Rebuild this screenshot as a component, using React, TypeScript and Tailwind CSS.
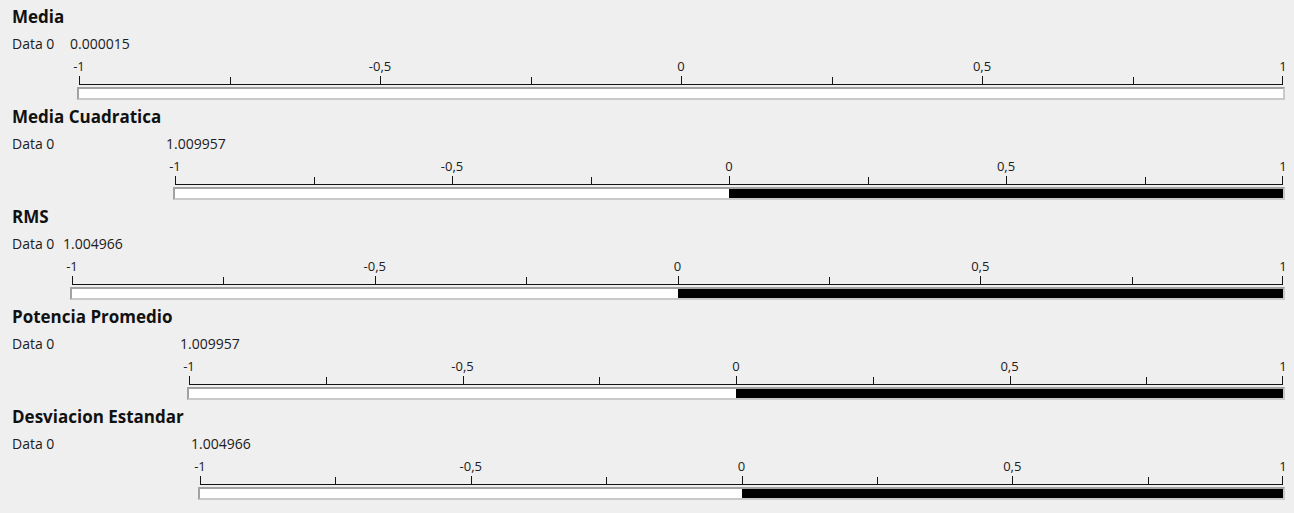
const sections = [
  { title: "Media", value: "0.000015", v: 0.000015, labelW: 58 },
  { title: "Media Cuadratica", value: "1.009957", v: 1.009957, labelW: 154 },
  { title: "RMS", value: "1.004966", v: 1.004966, labelW: 51 },
  { title: "Potencia Promedio", value: "1.009957", v: 1.009957, labelW: 168 },
  { title: "Desviacion Estandar", value: "1.004966", v: 1.004966, labelW: 179 },
];

const labels: Record<number, string> = { 0: "-1", 2: "-0,5", 4: "0", 6: "0,5", 8: "1" };

function Scale() {
  const ticks = [0, 1, 2, 3, 4, 5, 6, 7, 8];
  return (
    <div className="mx-[2px]">
      {/* labels */}
      <div className="relative h-[14px] mt-[6px]">
        {ticks
          .filter((i) => labels[i] !== undefined)
          .map((i) => (
            <span
              key={i}
              className="absolute top-0 -translate-x-1/2 whitespace-nowrap text-[13px] leading-[14px] text-[#202020]"
              style={{ left: `${(i / 8) * 100}%` }}
            >
              {labels[i]}
            </span>
          ))}
      </div>
      {/* ticks + axis */}
      <div className="relative h-[12px] border-b border-[#141414]">
        {ticks.map((i) => (
          <div
            key={i}
            className={`absolute bottom-0 w-px bg-[#141414] ${i % 2 === 0 ? "h-[8px]" : "h-[7px]"}`}
            style={{ left: `calc(${(i / 8) * 100}% - ${i === 8 ? 1 : 0}px)` }}
          />
        ))}
      </div>
    </div>
  );
}

function Bar({ v }: { v: number }) {
  const c = Math.max(-1, Math.min(1, v));
  const left = c >= 0 ? 50 : 50 + (c / 2) * 100;
  const width = (Math.abs(c) / 2) * 100;
  return (
    <div className="mt-[2px] h-[13px] border-2 border-t-[#a2a2a2] border-l-[#a2a2a2] border-b-[#c9c9c9] border-r-[#c9c9c9] bg-white">
      <div className="relative h-full">
        <div className="absolute inset-y-0 bg-black" style={{ left: `${left}%`, width: `${width}%` }} />
      </div>
    </div>
  );
}

export default function App() {
  return (
    <div
      className="w-full h-[513px] overflow-hidden bg-[#efefef] text-[#202020]"
      style={{ fontFamily: '"Open Sans", "Noto Sans", sans-serif' }}
    >
      {sections.map((s) => (
        <section key={s.title} className="h-[100px] pl-3 pr-[9px]">
          <h2 className="pt-[6px] text-[17px] leading-[21px] font-bold text-[#111]">{s.title}</h2>
          <div className="mt-[8px] flex">
            <div className="shrink-0 text-[14px] leading-[18px]" style={{ width: s.labelW }}>
              Data 0
            </div>
            <div className="flex-1 min-w-0">
              <div className="text-[14px] leading-[18px]">{s.value}</div>
              <div className="ml-[7px]">
                <Scale />
                <Bar v={s.v} />
              </div>
            </div>
          </div>
        </section>
      ))}
    </div>
  );
}
